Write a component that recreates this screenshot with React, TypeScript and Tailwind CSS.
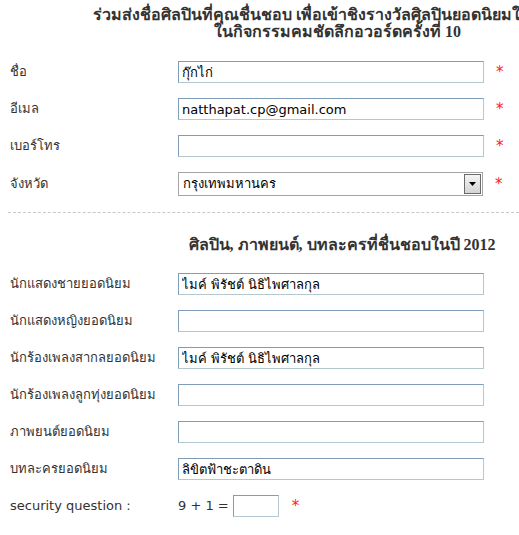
import React from 'react';

type Field = {
  label: string;
  value?: string;
  required?: boolean;
};

const contactFields: Field[] = [
  { label: 'ชื่อ', value: 'กุ๊กไก่', required: true },
  { label: 'อีเมล', value: 'natthapat.cp@gmail.com', required: true },
  { label: 'เบอร์โทร', required: true },
];

const favouriteFields: Field[] = [
  { label: 'นักแสดงชายยอดนิยม', value: 'ไมค์ พิรัชต์ นิธิไพศาลกุล' },
  { label: 'นักแสดงหญิงยอดนิยม' },
  { label: 'นักร้องเพลงสากลยอดนิยม', value: 'ไมค์ พิรัชต์ นิธิไพศาลกุล' },
  { label: 'นักร้องเพลงลูกทุ่งยอดนิยม' },
  { label: 'ภาพยนต์ยอดนิยม' },
  { label: 'บทละครยอดนิยม', value: 'ลิขิตฟ้าชะตาดิน' },
];

const inputClass =
  'h-[22px] w-[306px] border border-[#7f9db9] border-b-[#b4c8cf] border-r-[#b4c8cf] bg-white px-[3px] text-[13px] text-black outline-none';

const titleFont = { fontFamily: 'Georgia, "Liberation Serif", "DejaVu Serif", serif' };

function Star() {
  return <span className="ml-[12px] text-[15px] leading-none text-[#ff2020]">*</span>;
}

function Row({ field }: { field: Field }) {
  return (
    <div className="flex h-[22px] items-center">
      <label className="w-[168px] shrink-0">{field.label}</label>
      <input className={inputClass} defaultValue={field.value ?? ''} />
      {field.required && <Star />}
    </div>
  );
}

export default function App() {
  return (
    <div
      className="h-[535px] w-[519px] overflow-hidden bg-white text-[13px] text-[#333]"
      style={{ fontFamily: 'Tahoma, "DejaVu Sans", sans-serif' }}
    >
      {/* heading is wider than the window, it gets clipped on the right like the original */}
      <div className="pt-[6px] text-[16px] font-bold leading-[17px] text-[#333]" style={titleFont}>
        <div className="whitespace-nowrap pl-[93px]">ร่วมส่งชื่อศิลปินที่คุณชื่นชอบ เพื่อเข้าชิงรางวัลศิลปินยอดนิยมใน</div>
        <div className="whitespace-nowrap pl-[214px]">ในกิจกรรมคมชัดลึกอวอร์ดครั้งที่ 10</div>
      </div>

      <div className="mt-[21px] flex flex-col gap-[15px] pl-[10px]">
        {contactFields.map(f => (
          <Row key={f.label} field={f} />
        ))}
        <div className="flex h-[24px] items-center">
          <label className="w-[168px] shrink-0">จังหวัด</label>
          <div className="flex h-[24px] w-[305px] items-center border border-[#a5a5a5] bg-white">
            <span className="flex-1 px-[4px] text-[13px] text-black">กรุงเทพมหานคร</span>
            <div className="mr-[1px] flex h-[20px] w-[17px] items-center justify-center border border-[#6b6b6b] bg-gradient-to-b from-[#f4f4f4] to-[#d4d4d4]">
              <svg width="7" height="4" viewBox="0 0 7 4">
                <path d="M0 0h7L3.5 4z" fill="#000" />
              </svg>
            </div>
          </div>
          <Star />
        </div>
      </div>

      <div className="ml-[8px] mt-[16px] border-t border-dashed border-[#c8c8c8]" />

      <div className="mt-[23px] w-[684px] text-center text-[16px] font-bold leading-[17px] text-[#333]" style={titleFont}>
        ศิลปิน, ภาพยนต์, บทละครที่ชื่นชอบในปี 2012
      </div>

      <div className="mt-[20px] flex flex-col gap-[15px] pl-[10px]">
        {favouriteFields.map(f => (
          <Row key={f.label} field={f} />
        ))}
        <div className="flex h-[22px] items-center">
          <label className="w-[168px] shrink-0">security question :</label>
          <span className="text-[13px]">9 + 1 =</span>
          <input className="ml-[4px] h-[22px] w-[46px] border border-[#7f9db9] border-b-[#b4c8cf] border-r-[#b4c8cf] bg-white px-[3px] outline-none" />
          <span className="ml-[13px] text-[15px] leading-none text-[#ff2020]">*</span>
        </div>
      </div>
    </div>
  );
}
